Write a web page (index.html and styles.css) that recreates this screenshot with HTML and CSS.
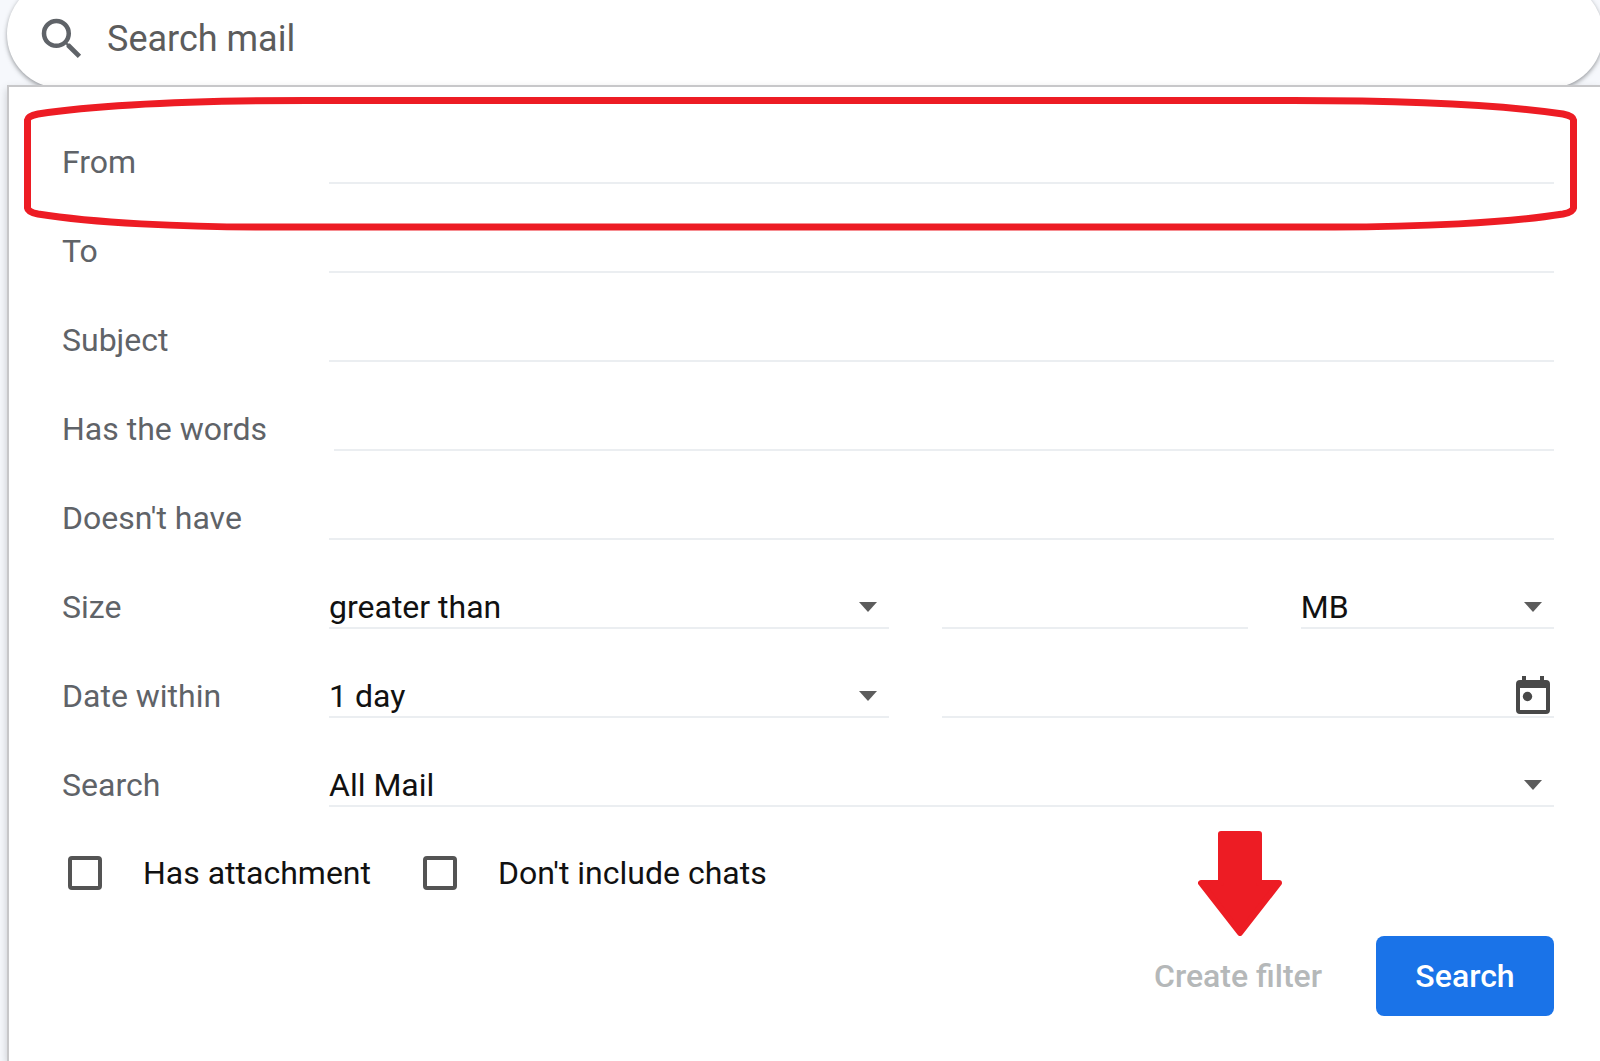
FILE: index.html
```
<!DOCTYPE html>
<html lang="en">

<head>
    <meta charset="utf-8">
    <title>Search mail</title>
    <meta name="viewport" content="width=device-width, initial-scale=1">
    <link rel="stylesheet" href="styles.css">
</head>

<body>
    <div class="searchBar">
        <svg class="searchIcon" viewBox="0 0 24 24" aria-hidden="true">
            <path d="M15.5 14h-.79l-.28-.27A6.47 6.47 0 0 0 16 9.5 6.5 6.5 0 1 0 9.5 16c1.61 0 3.09-.59 4.23-1.57l.27.28v.79l5 4.99L20.49 19l-4.99-5zm-6 0C7.01 14 5 11.99 5 9.5S7.01 5 9.5 5 14 7.01 14 9.5 11.99 14 9.5 14z" />
        </svg>
        <input type="text" placeholder="Search mail" aria-label="Search mail">
    </div>

    <form class="panel">
        <div class="row">
            <label for="from">From</label>
            <input type="text" id="from" class="field">
            <!-- red ring round the From row -->
            <svg class="ring" viewBox="0 0 1553 134" preserveAspectRatio="none" aria-hidden="true">
                <path d="M3.5 23 Q4 19 14 17 C75 8 170 3.5 284 3.5 H1269 C1383 3.5 1478 8 1539 17 Q1549 19 1549.5 23 V111 Q1549 115 1539 117 C1483 126 1393 130 1310 130 H233 C160 130 70 126 14 117 Q4 115 3.5 111 Z" />
            </svg>
        </div>
        <div class="row">
            <label for="to">To</label>
            <input type="text" id="to" class="field">
        </div>
        <div class="row">
            <label for="subject">Subject</label>
            <input type="text" id="subject" class="field">
        </div>
        <div class="row">
            <label for="has">Has the words</label>
            <input type="text" id="has" class="field indent">
        </div>
        <div class="row">
            <label for="hasnot">Doesn't have</label>
            <input type="text" id="hasnot" class="field">
        </div>
        <div class="row">
            <label for="size">Size</label>
            <div class="cols">
                <div class="select">
                    <select id="size" class="field">
                        <option>greater than</option>
                        <option>less than</option>
                    </select>
                </div>
                <input type="text" class="field" aria-label="Size value">
                <div class="select">
                    <select class="field" aria-label="Size unit">
                        <option>MB</option>
                        <option>KB</option>
                        <option>Bytes</option>
                    </select>
                </div>
            </div>
        </div>
        <div class="row">
            <label for="within">Date within</label>
            <div class="cols">
                <div class="select">
                    <select id="within" class="field">
                        <option>1 day</option>
                        <option>3 days</option>
                        <option>1 week</option>
                    </select>
                </div>
                <div class="date">
                    <input type="text" aria-label="Date">
                    <button type="button" aria-label="Choose date">
                        <svg viewBox="0 0 34 38" aria-hidden="true">
                            <path d="M6 0h4v4h14V0h4v4h2a4 4 0 0 1 4 4v26a4 4 0 0 1-4 4H4a4 4 0 0 1-4-4V8a4 4 0 0 1 4-4h2zM4 12v22h26V12z" fill-rule="evenodd" />
                            <circle cx="11.5" cy="20.5" r="4.7" />
                        </svg>
                    </button>
                </div>
            </div>
        </div>
        <div class="row">
            <label for="where">Search</label>
            <div class="select">
                <select id="where" class="field">
                    <option>All Mail</option>
                    <option>Inbox</option>
                </select>
            </div>
        </div>

        <div class="checks">
            <label><input type="checkbox">Has attachment</label>
            <label><input type="checkbox">Don't include chats</label>
        </div>

        <div class="buttons">
            <div class="create">
                <svg class="arrow" viewBox="0 0 84 105" aria-hidden="true">
                    <path d="M23 3h38v49h20L42 102 3 52h20z" />
                </svg>
                <button type="button" class="createBtn">Create filter</button>
            </div>
            <button type="submit" class="searchBtn">Search</button>
        </div>
    </form>
</body>

</html>
```

FILE: styles.css
```
* {
    box-sizing: border-box;
}

body,
input,
select,
button {
    margin: 0;
    padding: 0;
    font-family: Roboto, "Open Sans", sans-serif;
    font-size: 32px;
}

body {
    display: flex;
    flex-direction: column;
    min-height: 100vh;
    overflow: hidden;
    background: #f6f8fc;
    color: #111;
}

input,
select,
button {
    border: 0;
    border-radius: 0;
    outline: 0;
    background: none;
    color: inherit;
}

/* search bar, its top is cut by the window */
.searchBar {
    display: flex;
    align-items: center;
    gap: 18px;
    height: 108px;
    margin: -20px -3px 0 7px;
    padding: 10px 40px 0 28px;
    border-radius: 54px;
    background: #fff;
    box-shadow: 0 2px 4px rgba(60, 64, 67, 0.5);
}

.searchIcon {
    flex: none;
    width: 54px;
    height: 54px;
    fill: #5f6368;
}

.searchBar input {
    flex: 1;
    min-width: 0;
    font-size: 36px;
}

.searchBar input::placeholder {
    color: #5c5c5c;
    opacity: 1;
}

.panel {
    position: relative;
    flex: 1;
    margin: -3px 0 0 7px;
    padding: 8px 46px 40px 53px;
    border: solid #c7c7c9;
    border-width: 2px 0 0 2px;
    background: #fff;
    box-shadow: 0 4px 8px rgba(60, 64, 67, 0.25);
}

.row {
    position: relative;
    display: grid;
    grid-template-columns: 267px 1fr;
    align-items: end;
    height: 89px;
}

.row > label {
    height: 42px;
    line-height: 40px;
    color: #5f6368;
}

.field {
    display: block;
    width: 100%;
    height: 42px;
    line-height: 40px;
    border-bottom: 2px solid #ebeef1;
}

.field.indent {
    width: auto;
    margin-left: 5px;
}

.cols {
    display: grid;
    grid-template-columns: 559fr 306fr 253fr;
    gap: 53px;
}

.select {
    position: relative;
}

.select select {
    appearance: none;
    padding: 0 40px 0 0;
}

.select::after {
    content: "";
    position: absolute;
    top: 15px;
    right: 12px;
    border: 9px solid transparent;
    border-top: 10px solid #5c5c5c;
    border-bottom: 0;
    pointer-events: none;
}

.date {
    display: flex;
    grid-column: span 2;
    height: 42px;
    border-bottom: 2px solid #ebeef1;
}

.date input {
    flex: 1;
    min-width: 0;
}

.date button {
    width: 34px;
    height: 38px;
    margin-right: 4px;
}

.date svg {
    display: block;
    width: 34px;
    height: 38px;
    fill: #484848;
}

.checks {
    display: flex;
    padding: 46px 0 43px 6px;
}

.checks label {
    display: flex;
    align-items: center;
    gap: 41px;
    width: 355px;
    line-height: 40px;
    white-space: nowrap;
}

.checks input {
    flex: none;
    appearance: none;
    width: 34px;
    height: 34px;
    border: 4px solid #545454;
    border-radius: 4px;
}

.checks input:checked {
    background: #545454;
}

.buttons {
    display: flex;
    justify-content: flex-end;
    align-items: center;
    gap: 54px;
}

.buttons button {
    height: 80px;
    font-weight: 500;
}

.create {
    position: relative;
}

.createBtn {
    color: #b5b8b9;
}

.searchBtn {
    width: 178px;
    border-radius: 8px;
    background: #1a73e8;
    color: #fff;
}

/* red marks over the form */
.ring {
    position: absolute;
    top: 2px;
    left: -38px;
    width: calc(100% + 61px);
    height: 134px;
    fill: none;
    stroke: #ed1c24;
    stroke-width: 7px;
    pointer-events: none;
}

.arrow {
    position: absolute;
    right: 40px;
    bottom: 100%;
    width: 84px;
    height: 105px;
    fill: #ed1c24;
    stroke: #ed1c24;
    stroke-width: 6px;
    stroke-linejoin: round;
    pointer-events: none;
}
```
